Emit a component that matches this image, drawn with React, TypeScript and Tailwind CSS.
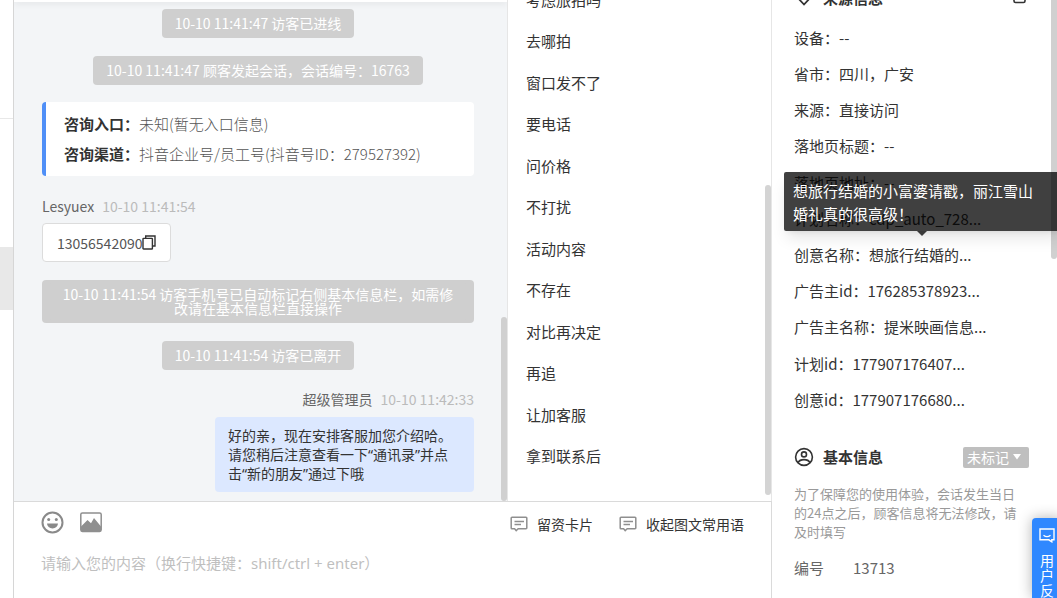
import type { ReactNode } from 'react';

const quickReplies = [
  '考虑旅拍吗',
  '去哪拍',
  '窗口发不了',
  '要电话',
  '问价格',
  '不打扰',
  '活动内容',
  '不存在',
  '对比再决定',
  '再追',
  '让加客服',
  '拿到联系后',
];

const sourceInfo = [
  { label: '设备', value: '--' },
  { label: '省市', value: '四川，广安' },
  { label: '来源', value: '直接访问' },
  { label: '落地页标题', value: '--' },
  { label: '落地页地址', value: '--' },
  { label: '计划名称', value: 'cdp_auto_728...' },
  { label: '创意名称', value: '想旅行结婚的...', tip: '想旅行结婚的小富婆请戳，丽江雪山婚礼真的很高级！' },
  { label: '广告主id', value: '176285378923...' },
  { label: '广告主名称', value: '提米映画信息...' },
  { label: '计划id', value: '177907176407...' },
  { label: '创意id', value: '177907176680...' },
];

const CardIcon = () => (
  <svg width="18" height="16" viewBox="0 0 18 16" fill="none" stroke="#8f8f8f" strokeWidth="1.5">
    <path d="M2 1.2h14a.8.8 0 0 1 .8.8v10a.8.8 0 0 1-.8.8H8.2L6.200 14.6l-1.600-1.800H2a.8.8 0 0 1-.8-.8V2a.8.8 0 0 1 .8-.8Z" />
    <path d="M4.5 5.500h9.500M4.5 8.500h6.500" />
  </svg>
);

const PinIcon = () => (
  <svg width="20" height="20" viewBox="0 0 20 20" fill="none" stroke="#333" strokeWidth="1.8">
    <path d="M10 17.5 5.2 12.4a6.8 6.8 0 1 1 9.6 0Z" />
    <circle cx="10" cy="7.6" r="2" />
  </svg>
);

const UserIcon = () => (
  <svg width="20" height="20" viewBox="0 0 20 20" fill="none" stroke="#333" strokeWidth="1.6">
    <circle cx="10" cy="10" r="8.4" />
    <circle cx="10" cy="7.4" r="2.5" />
    <path d="M4 15.6c1.2-2.4 3.2-3 6-3s4.800.6 6 3" />
  </svg>
);

const SystemNotice = ({ children }: { children: ReactNode }) => (
  <p className="mx-auto w-fit rounded-sm bg-[#cfcfcf] px-[13px] pt-[7px] pb-2 text-center text-sm leading-[14px] text-white">
    {children}
  </p>
);

const ChatPane = () => (
  <section className="relative min-w-0 flex-1 overflow-hidden border-r border-[#e6e6e6] bg-[#f3f5f7]">
    <div className="h-[2px] bg-white shadow-[0_1px_6px_rgba(0,0,0,0.15)]" />
    <div className="flex flex-col pt-[7px] pr-[33px] pl-7">
      <SystemNotice>10-10 11:41:47 访客已进线</SystemNotice>
      <div className="h-[18px]" />
      <SystemNotice>10-10 11:41:47 顾客发起会话，会话编号：16763</SystemNotice>

      {/* 咨询信息 */}
      <dl className="mt-[17px] rounded-sm border-l-4 border-[#4f8ff7] bg-white py-[7px] pl-[18px] text-[15px] leading-[30px] text-[#555]">
        <div className="flex">
          <dt className="font-bold text-[#333]">咨询入口：</dt>
          <dd className="font-light">未知(暂无入口信息)</dd>
        </div>
        <div className="flex">
          <dt className="font-bold text-[#333]">咨询渠道：</dt>
          <dd className="font-light">抖音企业号/员工号(抖音号ID：279527392)</dd>
        </div>
      </dl>

      {/* 访客消息 */}
      <div className="mt-5 flex gap-2 text-sm leading-5 text-[#666]">
        <span>Lesyuex</span>
        <time className="text-[#bbb]">10-10 11:41:54</time>
      </div>
      <div className="mt-[7px] flex h-[39px] w-fit items-center rounded border border-[#dcdcdc] bg-white px-[14px] text-sm text-[#555]">
        13056542090
        <button type="button" aria-label="复制" className="cursor-pointer">
          <svg width="14" height="15" viewBox="0 0 14 15" fill="none" stroke="#333" strokeWidth="1.4">
            <path d="M3.700 3.200V1h9.300v10h-2.500" />
            <rect x="1" y="3.400" width="9.400" height="10.600" rx="0.600" />
          </svg>
        </button>
      </div>

      <div className="h-[18px]" />
      <div className="flex flex-col rounded-sm bg-[#cfcfcf]">
        <SystemNotice>
          10-10 11:41:54 访客手机号已自动标记右侧基本信息栏，如需修
          <br />
          改请在基本信息栏直接操作
        </SystemNotice>
      </div>
      <div className="h-[18px]" />
      <SystemNotice>10-10 11:41:54 访客已离开</SystemNotice>

      {/* 客服消息 */}
      <div className="mt-[19px] flex justify-end gap-2 text-sm leading-5 text-[#666]">
        <span>超级管理员</span>
        <time className="text-[#bbb]">10-10 11:42:33</time>
      </div>
      <p className="mt-2 ml-auto w-[259px] rounded bg-[#dce8ff] px-[13px] py-[9px] font-['Noto_Sans','Noto_Sans_CJK_SC',sans-serif] text-sm leading-[19px] text-[#333]">
        好的亲，现在安排客服加您介绍哈。
        <br />
        请您稍后注意查看一下“通讯录”并点击“新的朋友”通过下哦
      </p>
    </div>
    <div className="absolute right-0 bottom-0 h-[184px] w-[6px] rounded-full bg-[#d0d0d0]" />
  </section>
);

const QuickReplyPane = () => (
  <section className="relative w-[264px] shrink-0 overflow-hidden border-r border-[#e6e6e6]">
    <ul className="-mt-[21px] flex h-[498px] flex-col px-[18px] text-[15px] text-[#333]">
      {quickReplies.map((text) => (
        <li key={text} className="flex flex-1 items-center">
          <button type="button" className="cursor-pointer">{text}</button>
        </li>
      ))}
    </ul>
    <div className="absolute right-0 bottom-[6px] h-[310px] w-[6px] rounded-full bg-[#d4d4d4]" />
  </section>
);

const MessageInput = () => (
  <section className="h-[97px] shrink-0 border-t border-r border-[#dadada] px-[27px] pt-[9px]">
    <div className="flex items-center">
      <button type="button" aria-label="表情" className="cursor-pointer">
        <svg width="23" height="23" viewBox="0 0 23 23">
          <circle cx="11.500" cy="11.500" r="10" fill="none" stroke="#8a8a8a" strokeWidth="2" />
          <circle cx="7.700" cy="8.600" r="1.500" fill="#8a8a8a" />
          <circle cx="15.300" cy="8.600" r="1.500" fill="#8a8a8a" />
          <path d="M6 12.600h11a5.500 4.800 0 0 1-11 0Z" fill="#8a8a8a" />
        </svg>
      </button>
      <button type="button" aria-label="图片" className="ml-4 cursor-pointer">
        <svg width="22" height="21" viewBox="0 0 22 21">
          <rect x="0.800" y="1" width="20.400" height="18.400" rx="1.600" fill="none" stroke="#8f8f8f" strokeWidth="1.500" />
          <path d="M1 14.500 7.500 8l3.500 3.200L14 6l7 8.500v4a1 1 0 0 1-1 1H2a1 1 0 0 1-1-1Z" fill="#8f8f8f" />
        </svg>
      </button>
      <div className="ml-auto flex gap-[26px] pt-[3px] text-sm text-[#333]">
        <button type="button" className="flex cursor-pointer items-center gap-[9px]">
          <CardIcon />
          留资卡片
        </button>
        <button type="button" className="flex cursor-pointer items-center gap-[9px]">
          <CardIcon />
          收起图文常用语
        </button>
      </div>
    </div>
    <textarea
      aria-label="消息内容"
      placeholder="请输入您的内容（换行快捷键：shift/ctrl + enter）"
      className="mt-[17px] block h-10 w-full resize-none font-['Noto_Sans','Noto_Sans_CJK_SC',sans-serif] text-[15px] leading-6 outline-none placeholder:text-[#bfbfbf]"
    />
  </section>
);

const VisitorPanel = () => (
  <aside className="relative w-[285px] shrink-0 overflow-hidden pl-[22px] text-[15px] text-[#333]">
    <div className="-mt-[13px] flex h-[33px] items-start pr-[30px]">
      <PinIcon />
      <h2 className="ml-[9px] leading-[22px] font-bold">来源信息</h2>
      <svg className="ml-auto" width="14" height="18" viewBox="0 0 14 18" fill="none" stroke="#333" strokeWidth="1.6">
        <rect x="1" y="5" width="11" height="10.500" rx="1.500" />
      </svg>
    </div>
    <dl className="flex h-[398px] flex-col">
      {sourceInfo.map((item) => (
        <div key={item.label} className="relative flex flex-1 items-center">
          <dt>{item.label}：</dt>
          <dd>{item.value}</dd>
          {item.tip && (
            <div
              role="tooltip"
              className="absolute bottom-full -left-[10px] z-20 mb-[6px] w-[280px] rounded-xs bg-black/75 pt-[7px] pb-[6px] pr-5 pl-[9px] leading-[23px] text-white shadow-lg"
            >
              {item.tip}
              <span className="absolute top-full left-[133px] border-x-[5px] border-t-[5px] border-x-transparent border-t-black/75" />
            </div>
          )}
        </div>
      ))}
    </dl>

    {/* 基本信息 */}
    <div className="mt-[28px] flex h-[22px] items-center pr-7">
      <UserIcon />
      <h2 className="ml-[9px] font-bold">基本信息</h2>
      <div className="relative ml-auto">
        <select
          aria-label="标记状态"
          className="block h-[21px] w-[66px] appearance-none rounded-xs bg-[#bfbfbf] pl-1 text-sm leading-[21px] text-white outline-none"
        >
          <option>未标记</option>
        </select>
        <svg className="pointer-events-none absolute top-[7px] right-2" width="8" height="6" viewBox="0 0 8 6" fill="#fff">
          <path d="M0 0h8L4 5.500Z" />
        </svg>
      </div>
    </div>
    <p className="mt-4 w-[229px] text-[13px] leading-[19px] text-[#999]">
      为了保障您的使用体验，会话发生当日的24点之后，顾客信息将无法修改，请及时填写
    </p>
    <dl className="mt-4 flex gap-[29px] leading-[22px] text-[#666]">
      <dt>编号</dt>
      <dd>13713</dd>
    </dl>

    <div className="absolute top-0 right-0 h-[259px] w-[6px] rounded-b-full bg-[#d0d0d0]" />
    <button
      type="button"
      className="absolute -right-[5px] bottom-0 flex h-20 w-[30px] cursor-pointer flex-col items-center rounded-tl bg-[#2f88ff] pt-[10px] text-sm leading-[15px] text-white shadow-[0_0_14px_rgba(0,0,0,0.3)]"
    >
      <svg width="16" height="15" viewBox="0 0 16 15" fill="none" stroke="#fff" strokeWidth="1.400">
        <path d="M1 1h14v10.800h-2.200v2L9.800 11.800H1Z" />
        <path d="M4.500 7.200c2 1.600 5 1.600 7 0" />
      </svg>
      <span className="mt-[10px]">用</span>
      <span>户</span>
      <span>反</span>
    </button>
  </aside>
);

export default function App() {
  return (
    <div className="flex h-screen overflow-hidden bg-white font-['Noto_Sans_CJK_SC',sans-serif]">
      {/* 会话列表边缘 */}
      <div className="w-[14px] shrink-0 border-r border-[#d6d6d6]">
        <div className="h-[119px] border-b border-[#e8e8e8]" />
        <div className="mt-32 h-[63px] bg-[#e8e8e8]" />
      </div>
      <main className="flex min-w-0 flex-1 flex-col">
        <div className="flex min-h-0 flex-1">
          <ChatPane />
          <QuickReplyPane />
        </div>
        <MessageInput />
      </main>
      <VisitorPanel />
    </div>
  );
}
